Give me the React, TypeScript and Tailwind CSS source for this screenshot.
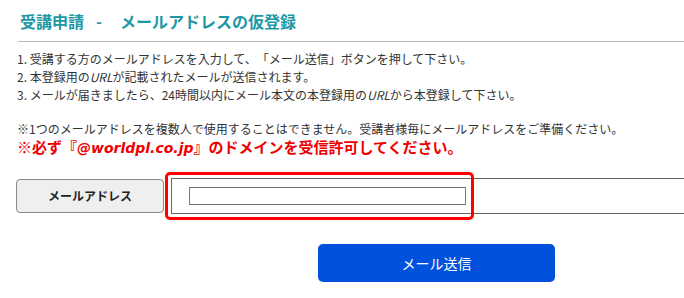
import React from "react";

export default function App() {
  return (
    <div className="w-[684px] h-[298px] overflow-hidden bg-white text-[#333] [text-spacing-trim:space-all] font-['Noto_Sans_CJK_JP','Noto_Sans',sans-serif]">
      <div className="ml-[18px] pt-[9px] pb-[8px] border-b border-[#bcbcbc]">
        <h1 className="pl-[2px] text-[16px] leading-[24px] font-bold text-[#1d98a6] whitespace-nowrap">
          受講申請<span className="ml-[12px] mr-[18px]">-</span>メールアドレスの仮登録
        </h1>
      </div>

      <div className="pl-[17px] mt-[8px] text-[12px] leading-[18px] whitespace-nowrap">
        <p>1. 受講する方のメールアドレスを入力して、「メール送信」ボタンを押して下さい。</p>
        <p>
          2. 本登録用の<i>URL</i>が記載されたメールが送信されます。
        </p>
        <p>
          3. メールが届きましたら、24時間以内にメール本文の本登録用の<i>URL</i>から本登録して下さい。
        </p>
        <p className="mt-[16px]">
          ※1つのメールアドレスを複数人で使用することはできません。受講者様毎にメールアドレスをご準備ください。
        </p>
        <p className="text-[15px] leading-[18px] font-bold text-[#ee0000]">
          ※必ず『
          <span className="italic font-['DejaVu_Sans',sans-serif] text-[14px]">@worldpl.co.jp</span>
          』のドメインを受信許可してください。
        </p>
      </div>

      <div className="flex items-center ml-[16px] mt-[21px]">
        <div className="w-[148px] h-[34px] flex items-center justify-center bg-[#efefef] border border-[#8a8a8a] rounded-[4px] text-[12px] font-bold text-[#222]">
          メールアドレス
        </div>
        <div className="relative ml-[7px] flex-1 h-[36px] flex items-center border-t border-b border-l border-[#666] pl-[17px]">
          <div className="w-[277px] h-[18px] border border-[#777] bg-white" />
          <div className="absolute left-[-7px] top-[-7px] w-[309px] h-[48px] border-[3px] border-[#ff0000] rounded-[5px]" />
        </div>
      </div>

      <div className="mt-[30px] ml-[318px]">
        <button className="w-[237px] h-[38px] rounded-[5px] bg-[#0051db] text-white text-[14px] flex items-center justify-center">
          メール送信
        </button>
      </div>
    </div>
  );
}
